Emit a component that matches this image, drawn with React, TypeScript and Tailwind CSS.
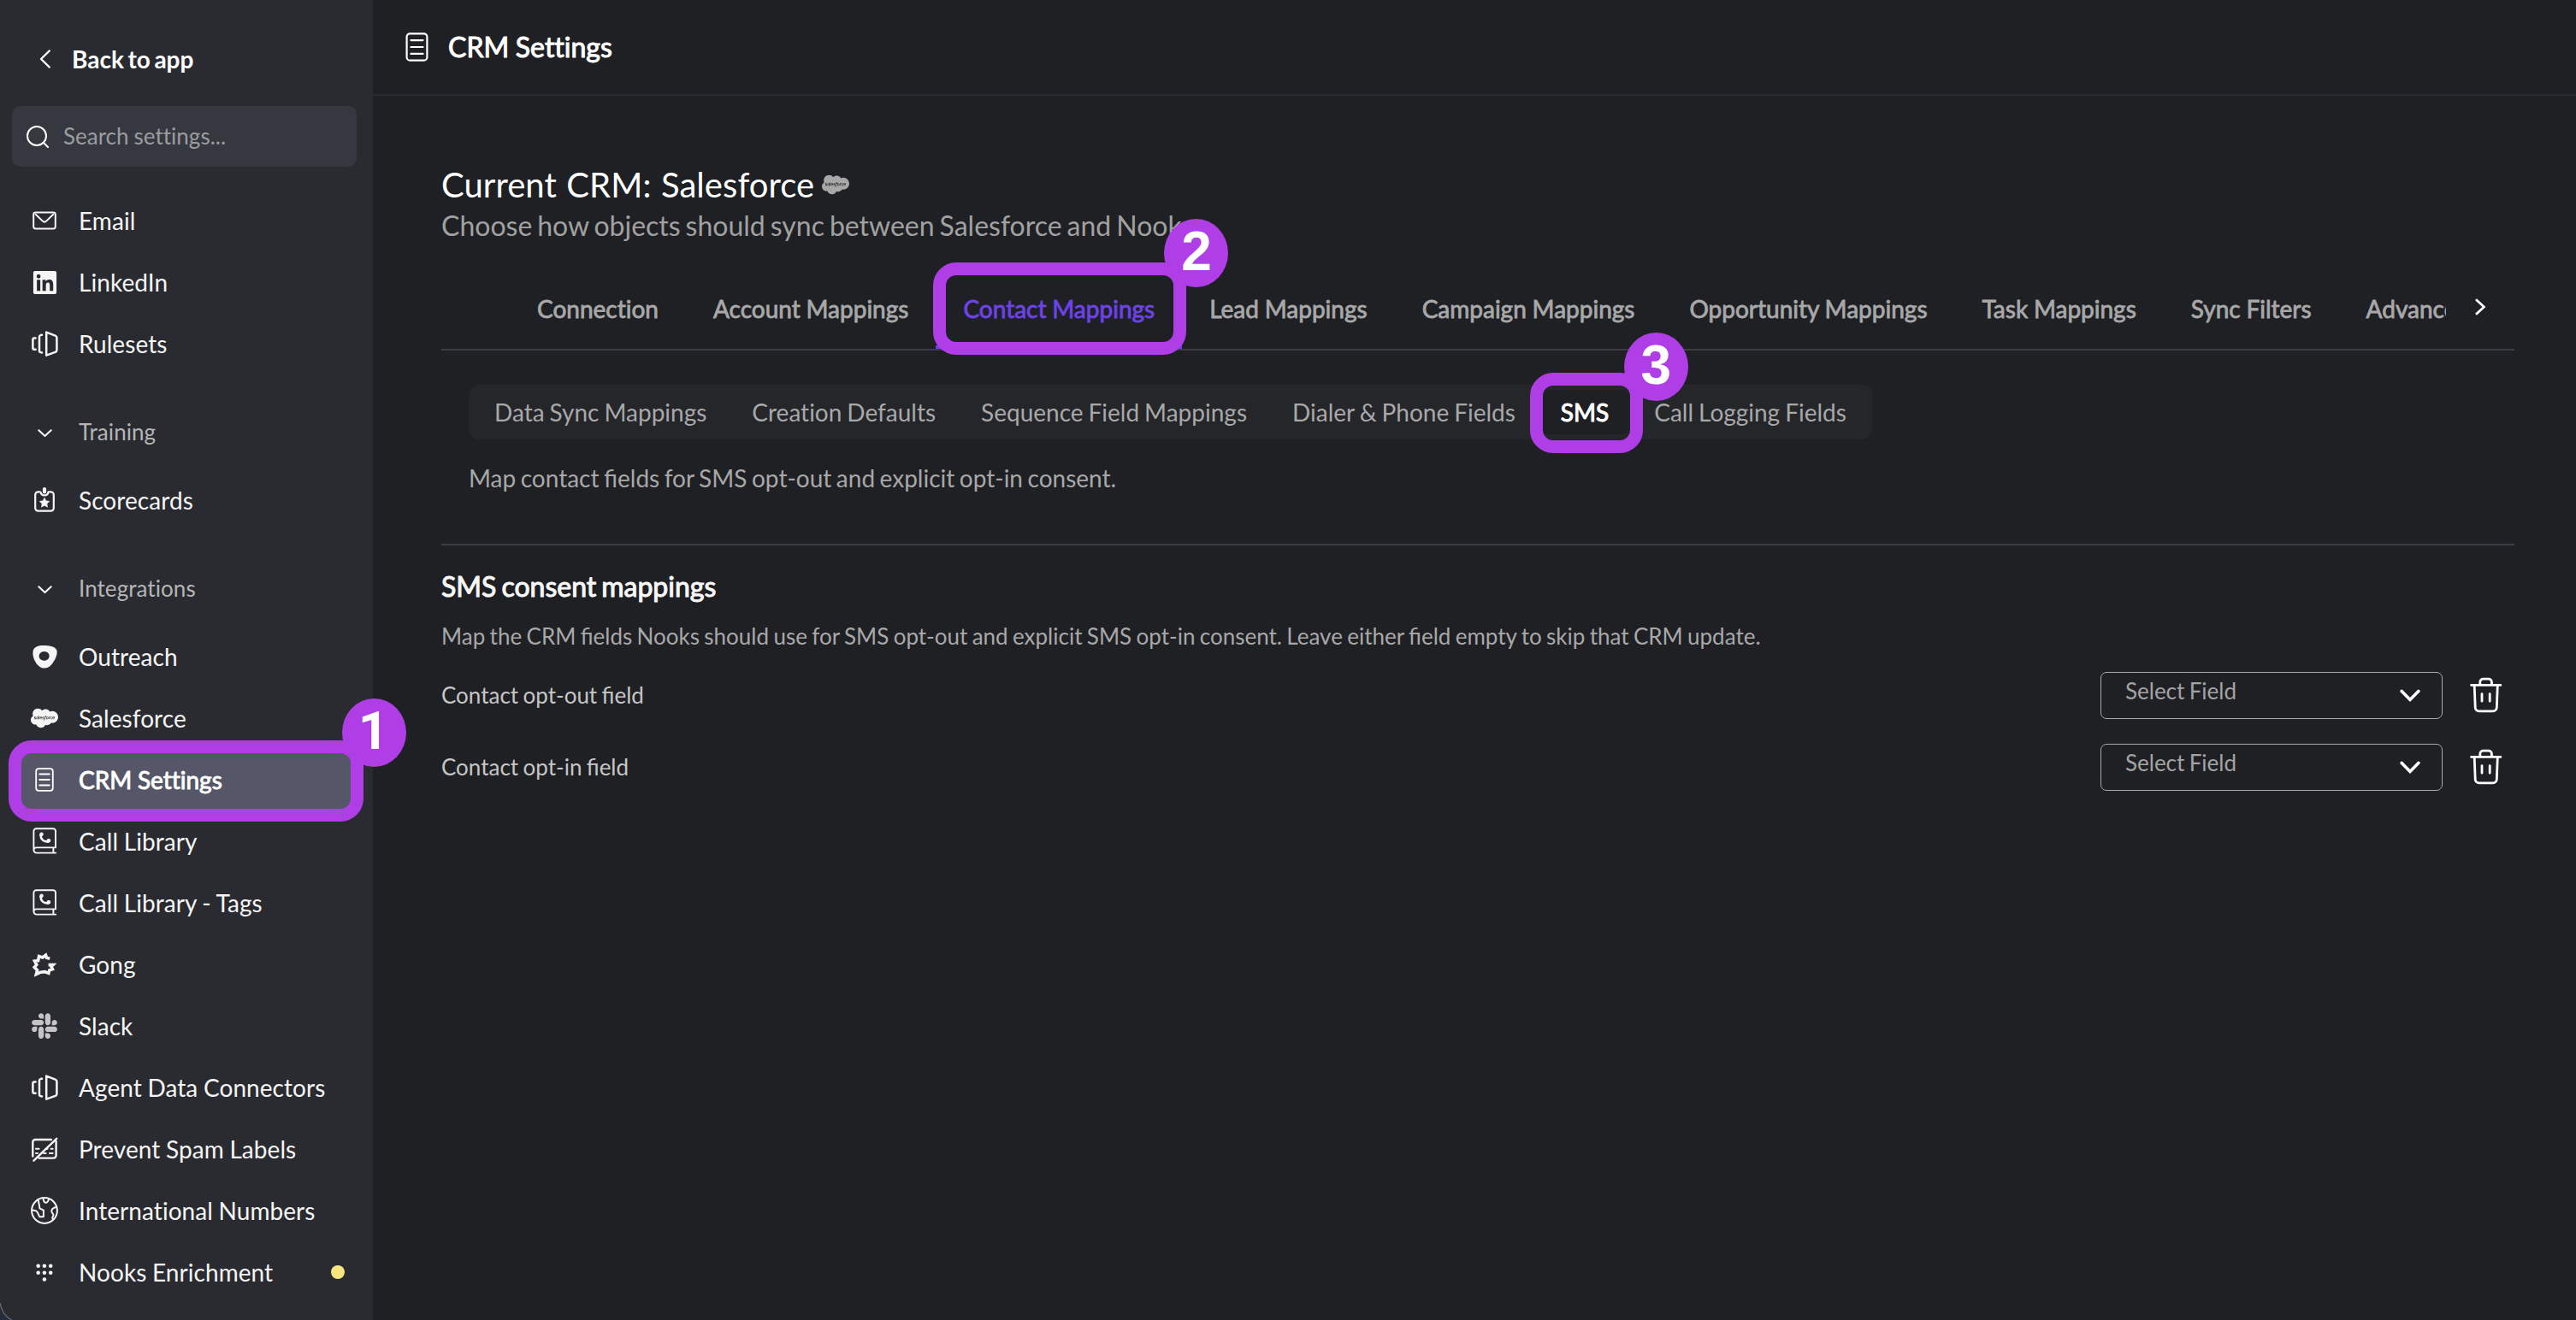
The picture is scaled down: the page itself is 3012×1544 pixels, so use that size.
import React from "react";
import { FaLinkedin, FaSalesforce, FaSlack } from "react-icons/fa";
import clsx from "clsx";

const DocIcon = ({ className }: { className?: string }) => (
  <svg className={className} viewBox="0 0 22 28" fill="none" stroke="currentColor" strokeWidth="1.8" strokeLinecap="round">
    <rect x="1.2" y="1.2" width="19.6" height="25.6" rx="3" />
    <path d="M5.2 7.5h11.6M5.2 14h11.6M5.2 20.5h11.6" />
  </svg>
);

const MailIcon = () => (
  <svg className="w-7 h-[22px]" viewBox="0 0 28 22" fill="none" stroke="currentColor" strokeWidth="2">
    <rect x="1.2" y="1.4" width="25.6" height="19" rx="2.4" />
    <path d="M3.2 3.2l8.6 8.4c1.4 1.3 3 1.3 4.4 0l8.6-8.4" />
  </svg>
);

const ConnectorIcon = () => (
  <svg className="size-8" viewBox="0 0 32 32" fill="none" stroke="currentColor" strokeWidth="2.5" strokeLinejoin="round" strokeLinecap="round">
    <path d="M18.2 2.6L28.6 6.6Q30.4 7.4 30.4 9V23.4Q30.4 25 28.6 25.8L18.2 29.6Z" />
    <path d="M13 5.8L11.4 6.1Q10 6.4 10 7.8V24.4Q10 25.8 11.4 26.1L13 26.4" />
    <path d="M5.6 9.4L3.6 9.5Q2.4 9.6 2.4 10.8V21.4Q2.4 22.6 3.6 22.7L5.6 22.8" />
  </svg>
);

const ScorecardIcon = () => (
  <svg className="size-8 -mt-0.5" viewBox="0 0 32 32" fill="none" stroke="currentColor" strokeWidth="2.2" strokeLinejoin="round">
    <path d="M11.5 7.4H8.6a3.4 3.4 0 0 0-3.4 3.4v15.4a3.4 3.4 0 0 0 3.4 3.4h14.8a3.4 3.4 0 0 0 3.4-3.4V10.8a3.4 3.4 0 0 0-3.4-3.4h-2.9c-.6 5.4-8.4 5.4-9 0" />
    <rect x="13.9" y="2" width="4.2" height="7.4" rx="2" fill="currentColor" stroke="none" />
    <path d="M16 14.2l1.8 3.6 4 .6-2.9 2.8.7 4-3.6-1.9-3.6 1.9.7-4-2.9-2.8 4-.6z" fill="currentColor" strokeWidth=".6" />
  </svg>
);

const OutreachIcon = () => (
  <svg className="size-8" viewBox="0 0 32 32" fill="currentColor">
    <path
      fillRule="evenodd"
      d="M15.6 3C21 3 27.5 4.2 29.8 7.4C32 10.8 29.8 17 27 21.6C24 26.6 20.5 29.6 16.2 29.6C11 29.6 6.4 25.2 4 19.4C2 14.4 1.7 8.8 4.4 6C7 3.4 11 3 15.6 3ZM15.7 10C12.3 10 9.7 12.4 9.7 15.5C9.7 18.5 12.2 20.7 15.6 20.7C18.9 20.7 21.6 18.4 21.6 15.2C21.6 12.2 19 10 15.7 10Z"
    />
  </svg>
);

const CallBookIcon = () => (
  <svg className="size-8" viewBox="0 0 32 32" fill="none" stroke="currentColor" strokeWidth="1.9" strokeLinejoin="round" strokeLinecap="round">
    <path d="M3.4 26.5V4.2a3 3 0 0 1 3-3h19.8a2.8 2.8 0 0 1 2.8 2.8v19.4H6.6a3.1 3.1 0 0 0 0 6.2h22.6M26.4 23.6v5.6" />
    <path d="M11.4 8.6c.2 4.8 3.6 8.2 9 8" strokeWidth="2.6" />
    <ellipse cx="12.6" cy="7.8" rx="1.6" ry="1.8" fill="currentColor" strokeWidth="1.2" />
    <ellipse cx="20.9" cy="15.2" rx="1.8" ry="1.6" fill="currentColor" strokeWidth="1.2" />
  </svg>
);

const GongIcon = () => (
  <svg className="size-8" viewBox="0 0 32 32" fill="none" stroke="currentColor" strokeWidth="3.6">
    <path d="M22.2 9.2L18.5 8.3L17.5 5.2L13.8 8L9.6 6.6L8.6 11.6L4.6 12.2L6.8 16.4L4.2 19.4L7.6 22.8L6.4 27.6L11.6 25.2L16.4 24.6L20.8 26.4L21.8 22.8L25.4 21.6L24 18.6L26 16.6H20.6" />
  </svg>
);

const SpamIcon = () => (
  <svg className="size-8" viewBox="0 0 32 32" fill="none" stroke="currentColor" strokeWidth="2.4" strokeLinecap="round">
    <path d="M2.3 24.5V8a3 3 0 0 1 3-3H24M29.6 7V23.6a3 3 0 0 1-3 3H9.5" />
    <path d="M3.4 29.6L30.2 3.8" />
    <path d="M6 15.7h3.6M17.5 15.7h2M23.6 15.7h2M6 21h2M15 21h2.6M22 21h3.6" strokeWidth="2" />
  </svg>
);

const GlobeIcon = () => (
  <svg className="size-8" viewBox="0 0 32 32" fill="none" stroke="currentColor" strokeWidth="2" strokeLinejoin="round">
    <circle cx="16" cy="16" r="14.9" />
    <path d="M8.6 3.2L10 10L10.4 13.3L14.9 15.6V23.2H10.2L8 18.4C7 16.4 5 15.6 1.2 15.6" />
    <path d="M14.6 1.6C14.8 4.8 15.8 6.6 17.6 6.8C19.4 6.8 20.4 4.8 21.2 2.2" />
    <path d="M29.6 12C26.5 12.6 24.5 14.4 24.3 16.6C24.2 18.8 26.6 19.4 26.4 21.4C26.2 23 25 23.6 25.3 25L26.6 26.4" />
  </svg>
);

const DotsIcon = () => (
  <svg className="size-8" viewBox="0 0 32 32" fill="currentColor">
    <circle cx="8.7" cy="8.8" r="2.3" />
    <circle cx="15.9" cy="8.8" r="2.3" />
    <circle cx="23.2" cy="8.8" r="2.3" />
    <circle cx="8.7" cy="16.7" r="2.3" />
    <circle cx="15.9" cy="16.7" r="2.3" />
    <circle cx="23.2" cy="16.7" r="2.3" />
    <circle cx="15.9" cy="24.5" r="2.3" />
  </svg>
);

const TrashIcon = () => (
  <svg className="w-[38px] h-[42px] mb-px" viewBox="0 0 38 42" fill="none" stroke="currentColor" strokeWidth="2.8" strokeLinecap="round" strokeLinejoin="round">
    <path d="M11.8 8.6V5.8a3.6 3.6 0 0 1 3.6-3.6h6.4a3.6 3.6 0 0 1 3.6 3.6V8.6" />
    <path d="M1.6 9.4H35.8" />
    <path d="M5.2 10L6.2 35.6a4.4 4.4 0 0 0 4.4 4.2H26.9a4.4 4.4 0 0 0 4.4-4.2L32.3 10" />
    <path d="M14 19.6v8.6M23.2 19.6v8.6" />
  </svg>
);

const Highlight = ({ box, badge, children }: { box: string; badge: string; children: React.ReactNode }) => (
  <>
    <span className={clsx("absolute rounded-[27px] border-[15px] border-[#b03ee6]", box)} />
    <span
      className={clsx(
        "absolute w-[75px] h-20 pb-[5px] flex items-center justify-center rounded-[50%] bg-[#b03ee6] text-white font-bold [-webkit-text-stroke:0]",
        badge
      )}
    >
      {children}
    </span>
  </>
);

const NavItem = ({ icon, label, dot }: { icon: React.ReactNode; label: string; dot?: boolean }) => (
  <a className="h-[72px] pl-[22px] pr-3.5 flex items-center text-[28px] text-[#f5f5f5]">
    <span className="w-8 mr-6 flex justify-center">{icon}</span>
    <span className="whitespace-nowrap">{label}</span>
    {dot && <span className="ml-auto size-4 rounded-full bg-[#fae57e]" />}
  </a>
);

const NavGroup = ({ label }: { label: string }) => (
  <div className="h-[111px] pl-[22px] pt-[23px] flex items-center text-[26px] text-[#b5b5b6]">
    <svg className="w-8 h-3 mr-6 mt-1 text-white" viewBox="0 0 32 12" fill="none" stroke="currentColor" strokeWidth="2" strokeLinecap="round" strokeLinejoin="round">
      <path d="M9.3 2.2L16.5 9L23.7 2.2" />
    </svg>
    {label}
  </div>
);

const Sidebar = () => (
  <aside className="relative w-[436px] shrink-0 h-full pl-3.5 pr-[19px] pt-3.5 bg-[#2a2b30] tracking-[0.06px] [word-spacing:-0.6px]">
    <a className="h-[110px] pl-8 flex items-center text-white text-[28px] font-bold tracking-normal [word-spacing:-0.08em]">
      <svg className="w-3.5 h-[22px] mr-6" viewBox="0 0 14 22" fill="none" stroke="currentColor" strokeWidth="2.2" strokeLinecap="round" strokeLinejoin="round">
        <path d="M11.8 1.4L2 11L11.8 20.6" />
      </svg>
      Back to app
    </a>
    <div className="h-[71px] mb-[27px] pl-[17px] flex items-center rounded-[10px] bg-[#35383f] text-[26px] text-[#9b9c9f] tracking-normal">
      <svg className="size-[26px] mr-[17px] text-white" viewBox="0 0 26 26" fill="none" stroke="currentColor" strokeWidth="2" strokeLinecap="round">
        <circle cx="12" cy="12" r="11" />
        <path d="M19.8 19.8L25 25" />
      </svg>
      <span className="pb-px">Search settings...</span>
    </div>

    <nav>
      <NavItem icon={<MailIcon />} label="Email" />
      <NavItem icon={<FaLinkedin className="size-[31px] shrink-0" />} label="LinkedIn" />
      <NavItem icon={<ConnectorIcon />} label="Rulesets" />

      <NavGroup label="Training" />
      <NavItem icon={<ScorecardIcon />} label="Scorecards" />

      <NavGroup label="Integrations" />
      <NavItem icon={<OutreachIcon />} label="Outreach" />
      <NavItem icon={<FaSalesforce className="w-8 h-[26px]" />} label="Salesforce" />
      <div className="relative h-[72px] pl-[22px] flex items-center rounded-lg bg-[#555769] text-[28px] text-white tracking-normal [-webkit-text-stroke:0.9px]">
        <span className="w-8 mr-6 flex justify-center">
          <DocIcon className="w-[22px] h-7" />
        </span>
        <span className="whitespace-nowrap [word-spacing:-0.5px]">CRM Settings</span>
        <Highlight box="-left-1 -top-2.5 w-[415px] h-[95px]" badge="left-[386px] -top-[59px] pr-0.5 [font-family:Roboto,sans-serif] text-[62px]">
          1
        </Highlight>
      </div>
      <NavItem icon={<CallBookIcon />} label="Call Library" />
      <NavItem icon={<CallBookIcon />} label="Call Library - Tags" />
      <NavItem icon={<GongIcon />} label="Gong" />
      <NavItem icon={<FaSlack className="size-[34px] shrink-0 text-[#c4c4c4]" />} label="Slack" />
      <NavItem icon={<ConnectorIcon />} label="Agent Data Connectors" />
      <NavItem icon={<SpamIcon />} label="Prevent Spam Labels" />
      <NavItem icon={<GlobeIcon />} label="International Numbers" />
      <NavItem icon={<DotsIcon />} label="Nooks Enrichment" dot />
    </nav>

    {/* rounded window corner */}
    <svg className="absolute left-0 bottom-0 w-3.5 h-5" viewBox="0 0 14 20">
      <path d="M0 0C1.5 9 6 16 13.5 20H0Z" fill="#262b3a" />
      <path d="M0 0C1.5 9 6 16 13.5 20" fill="none" stroke="#6a6b70" strokeWidth="1.2" />
    </svg>
  </aside>
);

const Tab = ({ label }: { label: string }) => (
  <button className="h-[95px] px-8 shrink-0 whitespace-nowrap [word-spacing:-0.4px] [font-variant-ligatures:none]">{label}</button>
);

const SubTab = ({ label }: { label: string }) => (
  <button className="h-[52px] px-6 shrink-0 whitespace-nowrap [word-spacing:-1.2px] [font-variant-ligatures:none]">{label}</button>
);

const FieldRow = ({ label }: { label: string }) => (
  <div className="h-[55px] pr-3.5 flex items-center justify-between text-[26px] text-[#c6c6c7]">
    <span className="pb-px">{label}</span>
    <div className="flex items-center gap-8">
      <div className="w-[400px] h-[55px] pl-7 pr-[25px] flex items-center justify-between rounded-[7px] border border-[#aaaaab] text-[#a3a3a4]">
        <span className="pb-[11px]">Select Field</span>
        <svg className="w-6 h-[15px] text-white" viewBox="0 0 24 15" fill="none" stroke="currentColor" strokeWidth="3.6" strokeLinecap="round">
          <path d="M2.2 2.4L12 12.4L21.8 2.4" />
        </svg>
      </div>
      <span className="text-white">
        <TrashIcon />
      </span>
    </div>
  </div>
);

const App = () => {
  return (
    <div className="w-[3012px] h-[1544px] flex overflow-hidden bg-[#1f2024] font-[Lato,sans-serif] leading-8 [word-spacing:-1.3px] [font-variant-ligatures:none]">
      <Sidebar />
      <main className="flex-1 min-w-0">
        <header className="h-28 pl-[38px] flex items-center border-b-2 border-[#2a2b30] text-white">
          <DocIcon className="w-[27px] h-[34px] mr-[23px]" />
          <h1 className="text-[32px] [word-spacing:-0.5px] [-webkit-text-stroke:1px]">CRM Settings</h1>
        </header>

        <div className="pl-20 pr-[72px] pt-20">
          <h2 className="h-12 flex items-center text-[40px] text-white tracking-[0.05px] [word-spacing:0.03em]">
            Current CRM: Salesforce
            <FaSalesforce className="w-8 h-[26px] ml-[9px] text-[#a8a8a9]" />
          </h2>
          <p className="h-12 leading-[48px] text-[32px] text-[#a1a1a2] [word-spacing:-0.07em]">
            Choose how objects should sync between Salesforce and Nooks
          </p>

          <div className="mt-[25px] flex items-center border-b-2 border-[#3b3d42] text-[28px] text-[#a8a8a9]">
            <div className="w-20 shrink-0" />
            <div className="flex-1 min-w-0 flex overflow-x-clip [-webkit-text-stroke:0.8px]">
              <Tab label="Connection" />
              <Tab label="Account Mappings" />
              <div className="relative shrink-0">
                <button className="h-[95px] px-8 pt-1 border-b-4 border-[#6d43e8] text-[#6d43e8] whitespace-nowrap [word-spacing:-0.4px]">
                  Contact Mappings
                </button>
                <Highlight
                  box="-left-[3px] -top-1.5 w-[296px] h-[108px]"
                  badge="left-[267px] -top-[57px] [font-family:'Liberation_Sans',sans-serif] text-[64px]"
                >
                  2
                </Highlight>
              </div>
              <Tab label="Lead Mappings" />
              <Tab label="Campaign Mappings" />
              <Tab label="Opportunity Mappings" />
              <Tab label="Task Mappings" />
              <Tab label="Sync Filters" />
              <Tab label="Advanced" />
            </div>
            <button className="w-20 pb-1 shrink-0 flex justify-center text-white">
              <svg className="w-3.5 h-5" viewBox="0 0 14 20" fill="none" stroke="currentColor" strokeWidth="2.8">
                <path d="M2 1.2L11.4 10L2 18.8" />
              </svg>
            </button>
          </div>

          <div className="pt-10 pl-8">
            <div className="w-fit h-16 px-1.5 flex items-center gap-[5px] rounded-xl bg-[#25262a] text-[28px] text-[#a8a8a9]">
              <SubTab label="Data Sync Mappings" />
              <SubTab label="Creation Defaults" />
              <SubTab label="Sequence Field Mappings" />
              <SubTab label="Dialer & Phone Fields" />
              <div className="relative shrink-0">
                <button className="h-[52px] px-6 rounded-lg bg-[#1f2024] text-white [-webkit-text-stroke:1px]">SMS</button>
                <Highlight
                  box="-left-3 -top-5 w-[132px] h-[94px]"
                  badge="left-[98px] -top-[67px] [font-family:'Liberation_Sans',sans-serif] text-[64px]"
                >
                  3
                </Highlight>
              </div>
              <SubTab label="Call Logging Fields" />
            </div>
            <p className="mt-[29px] text-[28px] text-[#a8a8a9] [word-spacing:-1.65px] [font-variant-ligatures:normal]">
              Map contact fields for SMS opt-out and explicit opt-in consent.
            </p>
          </div>

          <section className="mt-[61px] pt-8 border-t-2 border-[#3b3d42] [font-variant-ligatures:normal]">
            <h3 className="text-[32px] text-[#f8f8f8] [word-spacing:-0.07em] [-webkit-text-stroke:1px]">SMS consent mappings</h3>
            <p className="mt-[26px] text-[26px] text-[#a8a8a9]">
              Map the CRM fields Nooks should use for SMS opt-out and explicit SMS opt-in consent. Leave either field empty to skip that CRM update.
            </p>
            <div className="mt-[26px] flex flex-col gap-[29px]">
              <FieldRow label="Contact opt-out field" />
              <FieldRow label="Contact opt-in field" />
            </div>
          </section>
        </div>
      </main>
    </div>
  );
};

export default App;
